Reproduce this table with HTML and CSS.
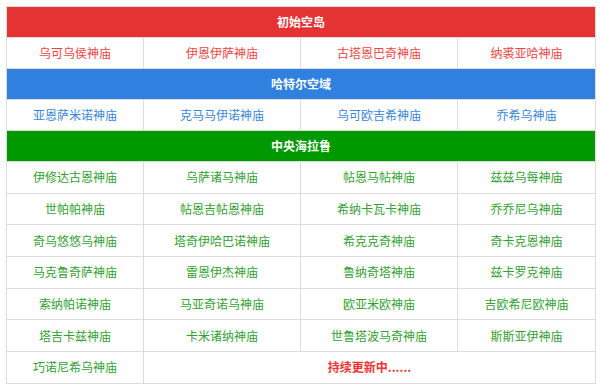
FILE: index.html
```html
<!DOCTYPE html>
<html lang="zh">
<head>
<meta charset="utf-8">
<link rel="stylesheet" href="styles.css">
</head>
<body>
<table class="temples">
  <colgroup>
    <col class="c1"><col class="c2"><col class="c3"><col class="c4">
  </colgroup>
  <tr class="head red-bg"><th colspan="4">初始空岛</th></tr>
  <tr class="row red">
    <td>乌可乌侯神庙</td><td>伊恩伊萨神庙</td><td>古塔恩巴奇神庙</td><td>纳裘亚哈神庙</td>
  </tr>
  <tr class="head blue-bg"><th colspan="4">哈特尔空域</th></tr>
  <tr class="row blue">
    <td>亚恩萨米诺神庙</td><td>克马马伊诺神庙</td><td>乌可欧吉希神庙</td><td>乔希乌神庙</td>
  </tr>
  <tr class="head green-bg"><th colspan="4">中央海拉鲁</th></tr>
  <tr class="row green tall">
    <td>伊修达古恩神庙</td><td>乌萨诸马神庙</td><td>帖恩马帖神庙</td><td>兹兹乌每神庙</td>
  </tr>
  <tr class="row green tall">
    <td>世帕帕神庙</td><td>帖恩吉帖恩神庙</td><td>希纳卡瓦卡神庙</td><td>乔乔尼乌神庙</td>
  </tr>
  <tr class="row green tall">
    <td>奇乌悠悠乌神庙</td><td>塔奇伊哈巴诺神庙</td><td>希克克奇神庙</td><td>奇卡克恩神庙</td>
  </tr>
  <tr class="row green tall">
    <td>马克鲁奇萨神庙</td><td>雷恩伊杰神庙</td><td>鲁纳奇塔神庙</td><td>兹卡罗克神庙</td>
  </tr>
  <tr class="row green tall">
    <td>索纳帕诺神庙</td><td>马亚奇诺乌神庙</td><td>欧亚米欧神庙</td><td>吉欧希尼欧神庙</td>
  </tr>
  <tr class="row green tall">
    <td>塔吉卡兹神庙</td><td>卡米诸纳神庙</td><td>世鲁塔波马奇神庙</td><td>斯斯亚伊神庙</td>
  </tr>
  <tr class="row green tall">
    <td>巧诺尼希乌神庙</td><td colspan="3" class="more">持续更新中......</td>
  </tr>
</table>
</body>
</html>
```

FILE: styles.css
```css
html, body {
  margin: 0;
  padding: 0;
  background: #ffffff;
}
body {
  padding: 6px 0 0 6px;
  font-family: "Noto Sans CJK SC", "Noto Sans", sans-serif;
  font-size: 12px;
}
.temples {
  border-collapse: collapse;
  width: 589px;
  table-layout: fixed;
  border: 1px solid #dcdcdc;
}
.c1 { width: 137px; }
.c2 { width: 157px; }
.c3 { width: 157px; }
.c4 { width: 138px; }
.temples th,
.temples td {
  border: 1px solid #dcdcdc;
  text-align: center;
  padding: 0;
  line-height: 16px;
}
.head th {
  height: 30px;
  color: #ffffff;
  font-weight: bold;
  font-size: 12px;
}
.red-bg th { background: #e53333; }
.blue-bg th { background: #3080e0; }
.green-bg th { background: #009900; }
.row td { height: 30px; }
.row.tall td { height: 30.7px; }
.red td { color: #ee4444; }
.blue td { color: #3a85d8; }
.green td { color: #33a033; }
.green td.more {
  color: #ee3333;
  font-weight: bold;
}
```
